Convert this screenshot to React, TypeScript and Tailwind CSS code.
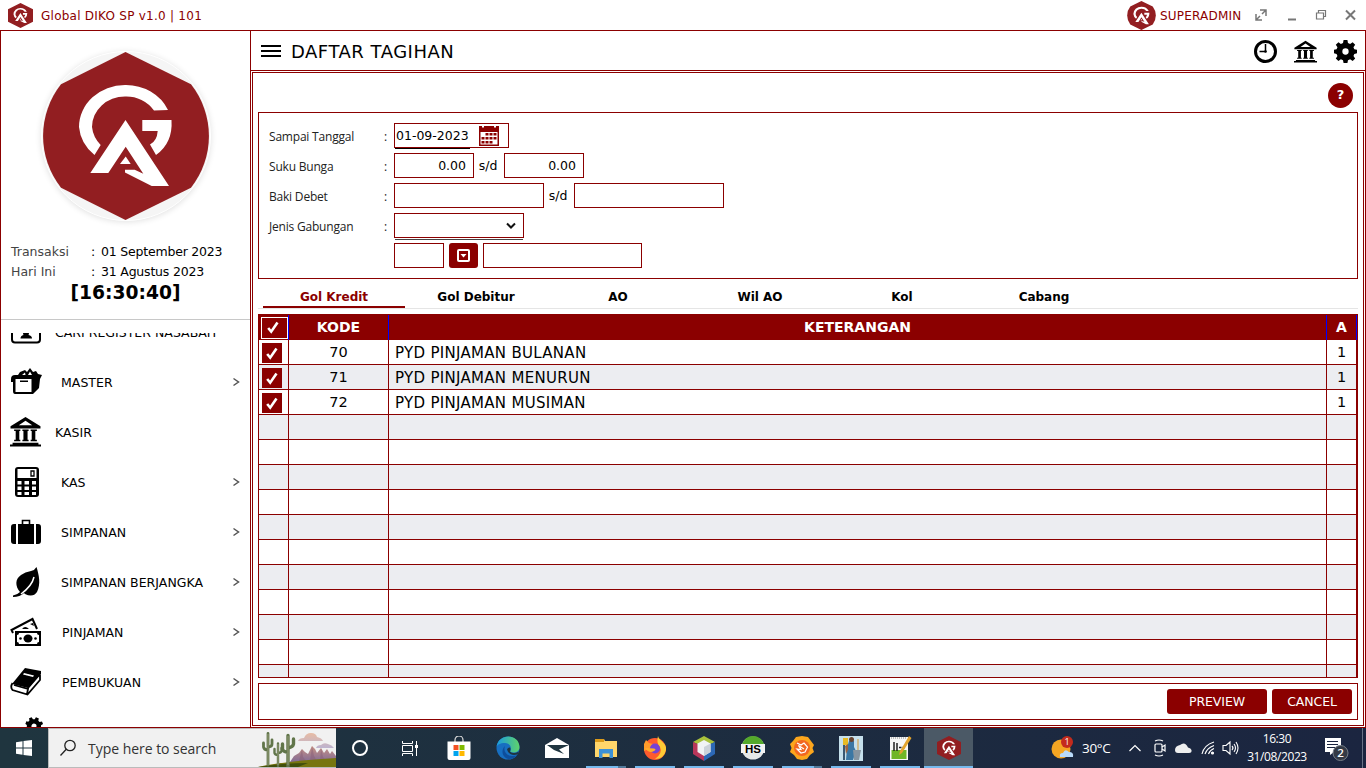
import React from "react";

const red = "#8b0000";

function Emblem({ size, round = false }: { size: number; round?: boolean }) {
  return (
    <svg width={size} height={size} viewBox="0 0 168 168" className="block shrink-0">
      {round ? (
        <path d="M83.500 0 149 32.300A83.500 83.500 0 0 1 149 135.700L83.500 168 19 135.700A83.500 83.500 0 0 1 19 32.300Z" fill="#921e21" />
      ) : (
        <path d="M84 0 168 42V126L84 168 0 126V42Z" fill="#921e21" />
      )}
      <path
        d="M52.500 103A46 42 0 0 1 37 75A46 42 0 0 1 83 33A46 42 0 0 1 126 58L112 58.500A33 31 0 0 0 83 44.500A33 30.500 0 0 0 50 75A33 31 0 0 0 58.700 93Z"
        fill="#fff"
      />
      <path d="M100.300 68H129.500Q131 91 114 103L108 92.500Q115 89 115.700 79H100.300Z" fill="#fff" />
      <path d="M83.500 68 127 134H109.700L83 120.500V117.700H92.700L101.300 121.700 83.700 94.700 66.300 121H48.300Z" fill="#fff" />
      <path d="M83.700 104.500 88.700 112H78Z" fill="#fff" />
    </svg>
  );
}

function Bank({ size }: { size: number }) {
  return (
    <svg width={size} height={size} viewBox="0 0 30 30" className="block shrink-0" fill="#000">
      <path fillRule="evenodd" d="M15 1 29.500 10V12H.5V10ZM15 4.500 8.500 9H21.500Z" />
      <path d="M4 13H10V14.500H9V23H10V24.500H4V23H5.500V14.500H4ZM12 13H18V14.500H17V23H18V24.500H12V23H13V14.500H12ZM20 13H26V14.500H24.500V23H26V24.500H20V23H21V14.500H20ZM2.500 26H27.500V27.500H30V29.500H0V27.500H2.500Z" />
    </svg>
  );
}

function Gear({ size }: { size: number }) {
  return (
    <svg width={size} height={size} viewBox="0 0 24 24" className="block shrink-0">
      <path
        fillRule="evenodd"
        d="M10 0h4l.6 3.200 2.200.9L19.500 2.300l2.600 2.600-1.800 2.600.9 2.200 2.800.5v3.700l-2.800.6-.9 2.200 1.800 2.600-2.600 2.600-2.700-1.700-2.200.9L14 24h-4l-.6-2.900-2.200-.9-2.600 1.700-2.700-2.600 1.700-2.600-.9-2.200L0 13.900v-3.700l2.700-.5.9-2.200-1.700-2.600 2.700-2.600 2.600 1.800 2.200-.9ZM12 8.700a3.300 3.300 0 1 0 0 6.600 3.300 3.300 0 0 0 0-6.600Z"
      />
    </svg>
  );
}

const icons: Record<string, React.ReactNode> = {
  card: (
    <>
      <path d="M2 0V23.500Q2 26.500 5 26.500H27Q30 26.500 30 23.500V0" fill="none" stroke="#000" strokeWidth="2" />
      <path d="M16 14C20 14 19 18 18.500 19Q22 19.500 22 22.500H10.500Q10.500 19.500 13.500 19C13 18 12 14 16 14Z" />
    </>
  ),
  master: (
    <>
      <path d="M1 13Q1 9 5 9H8L10 6 15 4 17 6 20 2 23 6 26 5 28 8 32 9 30 13 29 22 23 28H5Q3 28 3 25V16H1Z" />
      <path d="M12 9 15 6.500 15.500 9ZM18 9 20 5.500 22 9Z" fill="#fff" />
      <path d="M5.500 13H21.500V26H5.500Z" fill="#fff" />
      <path d="M10 14.500H18V16H10Z" />
    </>
  ),
  kas: (
    <>
      <rect x="5" y="1" width="24" height="30" rx="3" />
      <path d="M7.500 3H26.500V12H7.500ZM7.500 15H11.500V18.500H7.500ZM14.500 15H19V18.500H14.500ZM22 15H26V18.500H22ZM7.500 20.500H11.500V24H7.500ZM14.500 20.500H19V24H14.500ZM22 20.500H26V24H22ZM7.500 26H11.500V29H7.500ZM14.500 26H19V29H14.500ZM22 26H26V29H22Z" fill="#fff" />
      <path d="M21 5H24V10H21Z" fill="none" stroke="#000" strokeWidth="1.300" />
    </>
  ),
  simpanan: (
    <>
      <path d="M12.500 8V4.500H19.500V8" fill="none" stroke="#000" strokeWidth="1.600" />
      <path d="M8 8H24V28H8ZM6 8V28H4Q1 28 1 25V11Q1 8 4 8ZM26 8V28H28Q31 28 31 25V11Q31 8 28 8Z" />
    </>
  ),
  leaf: (
    <>
      <path d="M26.500 1C29 9 31 18 27 26Q23 32 15 28L14 27Q10 31 3 31V29.500Q7 29 10 26C5 20 5 13 11 9Q15 6 21 5Q25 4 26.500 1Z" />
      <path d="M24 11Q22 20 11 28" fill="none" stroke="#fff" strokeWidth="1.500" />
    </>
  ),
  money: (
    <>
      <path d="M3 17 1.500 14 22.500 3 27 13" fill="none" stroke="#000" strokeWidth="2" />
      <path d="M12 13Q15 9 19 13ZM20 8 23 7 24 10Z" />
      <path fillRule="evenodd" d="M5 15H31V30H5ZM9 17Q9 19 7 19V26Q9 26 9 28H27Q27 26 29 26V19Q27 19 27 17Z" />
      <ellipse cx="18" cy="22.500" rx="4.500" ry="4" />
      <circle cx="10.500" cy="22.500" r="1.300" />
      <circle cx="25.500" cy="22.500" r="1.300" />
    </>
  ),
  book: (
    <>
      <path d="M15 2 31 5V8L18 22 2 18Z" />
      <path d="M2.500 17Q0 21 2.500 24L17.500 28.500 30 14V9M18 22 30 8M4 19 18 23 17 28" fill="none" stroke="#000" strokeWidth="1.800" />
      <path d="M14 7 24 9.500 23 11 13 8.500Z" fill="#fff" />
    </>
  ),
};

function MenuRow({ icon, label, arrow, pad }: { icon: React.ReactNode; label: string; arrow?: boolean; pad: string }) {
  return (
    <div className="flex h-[50px] shrink-0 items-center pl-[9px] pr-[10px]">
      <svg width="32" height="32" viewBox="0 0 32 32" className="shrink-0">
        {icon}
      </svg>
      <span className={`${pad} flex-1 whitespace-nowrap pt-[2px] text-[12.500px] tracking-[0.02px] text-black`}>{label}</span>
      {arrow && (
        <svg width="8" height="10" viewBox="0 0 8 10">
          <path d="M1.500 1.500 6.500 5 1.500 8.500" fill="none" stroke="#555" strokeWidth="1.500" />
        </svg>
      )}
    </div>
  );
}

function Check() {
  return (
    <svg width="12" height="13" viewBox="0 0 12 13">
      <path d="M1.200 7 4.200 10.700 10.500 1.500" fill="none" stroke="#fff" strokeWidth="2.600" />
    </svg>
  );
}

function DateRow({ label, value }: { label: string; value: string }) {
  return (
    <div className="flex whitespace-nowrap">
      <span className="w-[80px] text-[#444]">{label}</span>
      <span className="w-[10px]">:</span>
      <span className="tracking-[-0.2px]">{value}</span>
    </div>
  );
}

function Sidebar() {
  return (
    <aside className="flex w-[251px] shrink-0 flex-col border-x border-[#8b0000]">
      <div className="flex h-[210px] shrink-0 justify-center pt-[20px]">
        <div className="flex h-[170px] w-[170px] items-center justify-center rounded-full border border-white bg-[#f5f5f5] shadow-[0_1px_6px_rgba(0,0,0,0.12)]">
          <Emblem size={168} round />
        </div>
      </div>
      <div className="h-[79px] shrink-0 border-b border-[#c8c8c8] pl-[10px] pt-px text-[12.500px] leading-[20px] text-black">
        <DateRow label="Transaksi" value="01 September 2023" />
        <DateRow label="Hari Ini" value="31 Agustus 2023" />
        <div className="pr-[10px] text-center text-[18.700px] font-bold leading-[22px]">[16:30:40]</div>
      </div>
      <nav className="mt-[13px] flex flex-1 flex-col overflow-hidden">
        <div className="-mt-[26px] flex flex-col">
          <MenuRow icon={icons.card} label="CARI REGISTER NASABAH" pad="pl-[13px]" />
          <MenuRow icon={icons.master} label="MASTER" arrow pad="pl-[19px]" />
          <MenuRow icon={<Bank size={31} />} label="KASIR" pad="pl-[13px]" />
          <MenuRow icon={icons.kas} label="KAS" arrow pad="pl-[19px]" />
          <MenuRow icon={icons.simpanan} label="SIMPANAN" arrow pad="pl-[19px]" />
          <MenuRow icon={icons.leaf} label="SIMPANAN BERJANGKA" arrow pad="pl-[19px]" />
          <MenuRow icon={icons.money} label="PINJAMAN" arrow pad="pl-[20px]" />
          <MenuRow icon={icons.book} label="PEMBUKUAN" arrow pad="pl-[20px]" />
          <div className="flex pl-[24px] pt-[10px]">
            <div className="rotate-[22.5deg]">
              <Gear size={18} />
            </div>
          </div>
        </div>
      </nav>
    </aside>
  );
}

function FormLabel({ children }: { children: string }) {
  return (
    <div className="flex w-[125px] shrink-0 pt-[3px] font-['Open_Sans',sans-serif] text-[12px] text-[#222]">
      <span className="w-[115px] whitespace-nowrap tracking-[-0.2px]">{children}</span>
      <span>:</span>
    </div>
  );
}

function Filters() {
  return (
    <div className="flex h-[167px] shrink-0 flex-col gap-[5px] border border-[#8b0000] pl-[10px] pt-[10px] text-[12.500px] text-black">
      <div className="flex h-[25px] items-center">
        <FormLabel>Sampai Tanggal</FormLabel>
        <div className="relative flex h-[25px] w-[115px] items-center border border-[#8b0000] pl-px">
          <span className="w-[83px] pt-px">01-09-2023</span>
          <svg width="20" height="20" viewBox="0 0 20 20">
            <path d="M0 0H3V1.500H5V0H15V1.500H17V0H20V20H0Z" fill={red} />
            <path d="M1.500 6H18.500V18.500H1.500Z" fill="#fff" />
            <path d="M6.500 7h3v2.500h-3zM10.500 7h3v2.500h-3zM14.500 7h3v2.500h-3zM2.500 11h3v2.500h-3zM6.500 11h3v2.500h-3zM10.500 11h3v2.500h-3zM14.500 11h3v2.500h-3zM2.500 15h3v2.500h-3zM6.500 15h3v2.500h-3zM10.500 15h3v2.500h-3z" fill={red} />
          </svg>
          <div className="absolute left-0 top-[24px] h-px w-[75px] bg-black" />
        </div>
      </div>
      <div className="flex h-[25px] items-center">
        <FormLabel>Suku Bunga</FormLabel>
        <div className="flex h-[25px] w-[80px] items-center justify-end border border-[#8b0000] pr-[7px] pt-[2px]">0.00</div>
        <span className="w-[30px] pr-[2px] pt-[2px] text-center">s/d</span>
        <div className="flex h-[25px] w-[80px] items-center justify-end border border-[#8b0000] pr-[7px] pt-[2px]">0.00</div>
      </div>
      <div className="flex h-[25px] items-center">
        <FormLabel>Baki Debet</FormLabel>
        <div className="h-[25px] w-[150px] border border-[#8b0000]" />
        <span className="w-[30px] pr-[2px] pt-[2px] text-center">s/d</span>
        <div className="h-[25px] w-[150px] border border-[#8b0000]" />
      </div>
      <div className="flex h-[25px] items-center">
        <FormLabel>Jenis Gabungan</FormLabel>
        <div className="relative flex h-[25px] w-[130px] items-center justify-end border border-[#8b0000] pr-[7px]">
          <svg width="10" height="8" viewBox="0 0 10 8">
            <path d="M1 1.500 5 5.500 9 1.500" fill="none" stroke="#111" strokeWidth="2" />
          </svg>
          <div className="absolute left-0 top-[25px] h-px w-[128px] bg-[#444]" />
        </div>
      </div>
      <div className="flex h-[25px] items-center pl-[125px]">
        <div className="h-[25px] w-[50px] border border-[#8b0000]" />
        <div className="ml-[5px] flex h-[25px] w-[29px] items-center justify-center rounded-[3px] bg-[#8b0000]">
          <svg width="13" height="13" viewBox="0 0 13 13">
            <rect x="1" y="1" width="11" height="11" rx="1" fill="none" stroke="#fff" strokeWidth="2" />
            <path d="M3.500 5H9.500L6.500 8.500Z" fill="#fff" />
          </svg>
        </div>
        <div className="ml-[5px] h-[25px] w-[159px] border border-[#8b0000]" />
      </div>
    </div>
  );
}

const rows = [
  ["70", "PYD PINJAMAN BULANAN"],
  ["71", "PYD PINJAMAN MENURUN"],
  ["72", "PYD PINJAMAN MUSIMAN"],
  ...Array.from({ length: 11 }, () => ["", ""]),
];

function Table() {
  return (
    <div className="mt-[5px] flex h-[364px] shrink-0 flex-col overflow-hidden border border-[#8b0000] text-[14.500px] text-black">
      <div className="flex h-[25px] shrink-0 bg-[#8b0000] text-[14px] font-bold text-white">
        <div className="flex w-[30px] items-center border-r border-[#0000ff] pl-[2px]">
          <div className="flex h-[22px] w-[27px] items-center border border-white pl-[5px]">
            <Check />
          </div>
        </div>
        <div className="flex w-[100px] items-center justify-center border-r border-[#0000ff]">KODE</div>
        <div className="flex flex-1 items-center justify-center border-r border-[#0000ff]">KETERANGAN</div>
        <div className="flex w-[30px] items-center justify-center border-r border-[#0000ff]">A</div>
      </div>
      {rows.map(([code, name], i) => (
        <div key={i} className={`flex h-[25px] shrink-0 border-b border-[#8b0000] ${i % 2 ? "bg-[#ecedf1]" : "bg-white"}`}>
          <div className="flex w-[30px] items-center border-r border-[#8b0000] pl-[3px] pt-[2px]">
            {code && (
              <div className="flex h-[20px] w-[20px] items-center justify-center bg-[#8b0000]">
                <Check />
              </div>
            )}
          </div>
          <div className="flex w-[100px] items-center justify-center border-r border-[#8b0000] pt-[2px]">{code}</div>
          <div className="flex flex-1 items-center border-r border-[#8b0000] pl-[6px] pt-[2px] text-[15px] tracking-[0.3px]">{name}</div>
          <div className="flex w-[30px] items-center justify-center border-r border-[#8b0000] pt-[2px]">{code && "1"}</div>
        </div>
      ))}
    </div>
  );
}

function Content() {
  return (
    <main className="flex flex-1 flex-col border-r border-[#8b0000]">
      <header className="flex h-[40px] shrink-0 items-center border-b border-[#8b0000] pl-[10px] pr-[8px]">
        <div className="flex w-[20px] flex-col gap-[3px]">
          <div className="h-[2px] bg-black" />
          <div className="h-[2px] bg-black" />
          <div className="h-[2px] bg-black" />
        </div>
        <h1 className="flex-1 pl-[10px] pt-px text-[18px] tracking-[0.5px] text-black">DAFTAR TAGIHAN</h1>
        <div className="flex items-center gap-[17px] pt-[2px]">
          <svg width="23" height="23" viewBox="0 0 23 23">
            <circle cx="11.500" cy="11.500" r="10" fill="none" stroke="#000" strokeWidth="3" />
            <path d="M11.500 4V11.500H5.500" fill="none" stroke="#000" strokeWidth="1.500" />
            <circle cx="11.500" cy="11.500" r="1.300" />
          </svg>
          <Bank size={23} />
          <Gear size={23} />
        </div>
      </header>
      <div className="mb-px ml-px mr-px mt-px flex flex-1 flex-col border border-[#8b0000] px-[5px]">
        <div className="flex h-[39px] shrink-0 items-center justify-end pr-[5px] pt-[5px]">
          <div className="flex h-[25px] w-[25px] items-center justify-center rounded-full bg-[#8b0000] text-[13px] font-bold text-white">?</div>
        </div>
        <Filters />
        <div className="flex h-[30px] shrink-0 border-b border-[#e5e5e5] pl-[5px] text-[12px] font-bold text-black">
          {["Gol Kredit", "Gol Debitur", "AO", "Wil AO", "Kol", "Cabang"].map((t, i) => (
            <div
              key={t}
              className={`flex w-[142px] items-center justify-center whitespace-nowrap ${i === 0 ? "border-b-2 border-[#8b0000] pt-[9px] text-[#8b0000]" : "pt-[7px]"}`}
            >
              {t}
            </div>
          ))}
        </div>
        <Table />
        <div className="mt-[5px] flex h-[37px] shrink-0 items-center justify-end gap-[5px] border border-[#8b0000] pr-[5px] text-[12.500px] tracking-[-0.1px] text-white">
          <button className="h-[25px] w-[100px] rounded-[3px] bg-[#8b0000] pt-[2px]">PREVIEW</button>
          <button className="h-[25px] w-[80px] rounded-[3px] bg-[#8b0000] pt-[2px]">CANCEL</button>
        </div>
      </div>
    </main>
  );
}

const apps: { art: React.ReactNode; state: "off" | "on" | "multi" | "active" }[] = [
  {
    state: "off",
    art: (
      <>
        <path d="M8 6V4a4 4 0 0 1 8 0V6" fill="none" stroke="#ddd" strokeWidth="1.200" />
        <path d="M.5 5.500H23.500V22Q23.500 24 21.500 24H2.500Q.5 24 .5 22Z" fill="#fff" />
        <path d="M6.500 9h5v5h-5z" fill="#f25022" />
        <path d="M12.500 9h5v5h-5z" fill="#7fba00" />
        <path d="M6.500 15h5v5h-5z" fill="#00a4ef" />
        <path d="M12.500 15h5v5h-5z" fill="#ffb900" />
      </>
    ),
  },
  {
    state: "off",
    art: (
      <>
        <defs>
          <linearGradient id="edgeTop">
            <stop stopColor="#1a9be0" />
            <stop offset="1" stopColor="#5fd36a" />
          </linearGradient>
        </defs>
        <circle cx="12" cy="12" r="11.500" fill="#176fc1" />
        <path d="M.6 11C2-3 23-3 23.500 11 23.500 17 17 17.500 14 15.500 16 13 15 7 9 7 4 7 1 9 .6 11Z" fill="url(#edgeTop)" />
        <path d="M9 10C7 15 10 20 17 20Q20 20 21.500 18.500 18 23 13 23C7 22 4 15 9 10Z" fill="#0e4e9b" />
        <path d="M14 15.500Q17 18.500 23 15.500L21.500 18.500Q13 20.500 11 13.500 12 11 14 11.500 15 13 14 15.500Z" fill="#203540" />
      </>
    ),
  },
  {
    state: "off",
    art: (
      <>
        <path d="M0 9 12 2 24 9V22H0Z" fill="#fff" />
        <path d="M2 9H24L14 13.500 19 18 9 14Z" fill="#203540" />
      </>
    ),
  },
  {
    state: "multi",
    art: (
      <>
        <path d="M1 3H10L11 5H23V21H1Z" fill="#ffd66b" />
        <path d="M1 3H10V6H1Z" fill="#dc9b1a" />
        <path d="M5 13H19V22H15.500V17.500H8.500V22H5Z" fill="#3d91d6" />
      </>
    ),
  },
  {
    state: "on",
    art: (
      <>
        <circle cx="12" cy="13" r="11" fill="#ff5b2d" />
        <path d="M15 0C16 5 24 7 23 14Q21 23 12 23 20 17 17 11 13 7 15 0Z" fill="#ffcb35" />
        <path d="M1 8 3 4 6 7 10 8 8 12 1 15Z" fill="#ff9c2a" />
        <circle cx="12" cy="12.500" r="5" fill="#7542d5" />
        <path d="M2 12 11 12.500Q14 13.500 11 15 6 18 2 12Z" fill="#ffae2b" />
      </>
    ),
  },
  {
    state: "on",
    art: (
      <>
        <path d="M12 0 23 6 12 11 1 6Z" fill="#a9c23c" />
        <path d="M1 6 12 11V25L1 18Z" fill="#b9365a" />
        <path d="M23 6 12 11V25L23 18Z" fill="#2c68b5" />
        <path d="M12 4 18.500 7.500V16L12 20 5.500 16V7.500Z" fill="#f1f3f4" />
        <path d="M12 11 18.500 7.500V16L12 20Z" fill="#ccd2d9" />
      </>
    ),
  },
  {
    state: "on",
    art: (
      <>
        <circle cx="12" cy="12" r="11.500" fill="#e6e8e8" />
        <path d="M.8 9A11.500 11.500 0 0 1 23.200 9Z" fill="#54a92b" />
        <path d="M0 8H24V17H0Z" fill="#f3f3f3" />
        <text x="12" y="16.500" textAnchor="middle" fontSize="11.500" fontWeight="bold" fontFamily="Liberation Sans">HS</text>
      </>
    ),
  },
  {
    state: "multi",
    art: (
      <>
        <path d="M6 1 12 0 18 1 21 5 24 9 22.500 12 24 16 20 19 17 23 12 24 7 23 4 19 0 16 1.500 12 0 8 3 5Z" fill="#fca61d" />
        <circle cx="12" cy="12" r="8" fill="#f26722" />
        <path d="M7 7 11 9 14 7 17.500 11 15 16 11 17 7 13 11 13.500 8.500 9.500 14 13" fill="none" stroke="#fff" strokeWidth="1.200" />
      </>
    ),
  },
  {
    state: "on",
    art: (
      <>
        <path d="M0 0H24V25H0Z" fill="#c6e0ec" />
        <path d="M4 2H9V9H4Z" fill="#e7ba23" />
        <path d="M10 5H15V11L17 15 14 24H7L8 12Z" fill="#3b77a4" />
        <path d="M9 8 6 10 7 18 9 14Z" fill="#9b6341" />
        <circle cx="12.500" cy="3.500" r="2.500" fill="#68432f" />
        <path d="M14 14H22L20 24H15Z" fill="#8795a1" />
        <path d="M19 3V14" stroke="#d69b37" />
        <path d="M5 9V24" stroke="#385772" strokeWidth="2" />
      </>
    ),
  },
  {
    state: "on",
    art: (
      <>
        <path d="M2 1H20V24H2Z" fill="#f7f7f7" />
        <path d="M3.500 14H18.500V23H3.500Z" fill="#70b626" />
        <path d="M3 2H19" stroke="#888" strokeDasharray="1 1" />
        <path d="M6 6V15M9 7V15M11 11.500H13.500M14.500 11.500H17" stroke="#222" strokeWidth="1.500" />
        <path d="M23.500 2 14 17 11 19 12 15 21 0Z" fill="#e3a42e" />
      </>
    ),
  },
  { state: "active", art: <Emblem size={24} /> },
];

function Taskbar() {
  return (
    <footer className="flex h-[40px] shrink-0 items-stretch bg-linear-to-r from-[#1f353f] to-[#1b2540] font-['Open_Sans',sans-serif] text-white">
      <div className="flex w-[48px] items-center justify-center">
        <svg width="16" height="16" viewBox="0 0 16 16" fill="#fff">
          <path d="M0 2.200 6.500 1.300V7.500H0ZM7.500 1.100 16 0V7.500H7.500ZM0 8.500H6.500V14.700L0 13.800ZM7.500 8.500H16V16L7.500 14.900Z" />
        </svg>
      </div>
      <div className="flex w-[288px] items-center border border-r-0 border-[#bbb] bg-[#f1f1f1] pl-[10px]">
        <svg width="18" height="18" viewBox="0 0 18 18" fill="none" stroke="#222" strokeWidth="1.300">
          <circle cx="11" cy="6.500" r="5.200" />
          <path d="M7.500 10 1.500 16.500" />
        </svg>
        <span className="flex-1 whitespace-nowrap pl-[11px] text-[14px] tracking-[-0.030px] text-[#333]">Type here to search</span>
        <svg width="78" height="38" viewBox="0 0 78 38">
          <defs>
            <linearGradient id="rock" x1="0" y1="0" x2="0" y2="1">
              <stop stopColor="#c99383" />
              <stop offset="1" stopColor="#75649a" />
            </linearGradient>
            <linearGradient id="cloud" x1="0" y1="0" x2="0" y2="1">
              <stop stopColor="#e8bca4" />
              <stop offset="1" stopColor="#bdb3cf" />
            </linearGradient>
          </defs>
          <path d="M30 36 36 27 41 24 44 20 47 23 50 25 54 17 57 20 59 24 63 19 66 24 69 20 72 25 74 22 78 27V36Z" fill="url(#rock)" />
          <path d="M54 17 56 27 59 32H52ZM63 19 65 28 68 32H62ZM44 20 45 28 48 32H41Z" fill="#8a6178" opacity=".55" />
          <path d="M40 12Q41 9 46 9 48 4 53 4 58 4 59 8 64 9 65 12ZM58 19Q59 16 63 16 66 13 70 15 74 16 76 19Z" fill="url(#cloud)" />
          <path d="M0 38Q28 32 78 29V38Z" fill="#77750f" />
          <path d="M0 38Q24 34 50 34L40 38Z" fill="#414f0c" />
          <g fill="none" stroke="#61754a" strokeLinecap="round">
            <path d="M10 36V4.500M5.500 14V18Q6 21 10 21M14 11V15Q14 18 10 18" strokeWidth="2.800" />
            <path d="M20 37V14.500M16.500 20V24Q17 26 20 26M23.500 19V22Q23 24 20 24" strokeWidth="2.400" />
            <path d="M30 37V6.500M24.500 15V20Q25 23 30 23M35.500 10V15Q35 18 30 19" strokeWidth="3.400" />
          </g>
          <path d="M10 5V36M20 15V36M30 7V36" stroke="#a3a785" strokeWidth=".8" />
        </svg>
      </div>
      <div className="flex w-[48px] items-center justify-center">
        <div className="h-[16px] w-[16px] rounded-full border-[2.500px] border-white" />
      </div>
      <div className="flex w-[50px] items-center justify-center">
        <svg width="17" height="15" viewBox="0 0 17 15" fill="none" stroke="#fff">
          <path d="M1.500 0V2.500H11.500V0M1.500 15V12.500H11.500V15M1.500 4.500H11.500V10.500H1.500ZM15.500 0V15" />
          <path d="M14 4H17V7H14Z" fill="#fff" stroke="none" />
        </svg>
      </div>
      <div className="flex">
        {apps.map(({ art, state }, i) => (
          <div key={i} className={`relative flex w-[49px] items-center justify-center ${state === "active" ? "bg-[#4b5966]" : ""}`}>
            <svg width="24" height="25" viewBox="0 0 24 25">
              {art}
            </svg>
            {state !== "off" && (
              <div
                className={`absolute bottom-0 h-[2px] bg-[#76b9ed] ${state === "active" ? "w-[49px]" : state === "multi" ? "w-[40px] border-r-[8px] border-[#527a9b]" : "w-[40px]"}`}
              />
            )}
          </div>
        ))}
      </div>
      <div className="flex flex-1 items-center justify-end">
        <svg width="25" height="24" viewBox="0 0 25 24">
          <circle cx="10" cy="13" r="9.500" fill="#f5a623" />
          <path d="M9 21Q8 17 12 17 14 12 18 16 23 16 22 21Z" fill="#b9dbfa" />
          <circle cx="16" cy="6" r="6" fill="#c42b1c" />
          <text x="16" y="9" textAnchor="middle" fontSize="9" fill="#fff">1</text>
        </svg>
        <span className="ml-[6px] w-[46px] text-[13.500px] tracking-[-0.3px]">30°C</span>
        <svg width="113" height="20" viewBox="0 0 113 20" fill="none" stroke="#fff" strokeWidth="1.200">
          <path d="M1.500 13 7 7.500 12.500 13" />
          <rect x="27" y="6" width="7" height="8" rx="1" />
          <path d="M34 9 37 7V13L34 11M27 3Q31 1 35 3M27 17Q31 19 35 17" />
          <path d="M50 15H61Q64 15 63.500 12 63 10 60 9.500 57 3 52 7 47 8 47 12 47 15 50 15Z" fill="#eee" stroke="none" />
          <g strokeWidth="1.100">
            <path d="M74 16Q76 7 86 4M77 16Q79 10 86 7.500M80.500 16Q82 12 86 10.500" />
            <circle cx="84.500" cy="15" r="1" fill="#fff" />
            <path d="M95 7.500H98L102 4V16L98 12.500H95ZM104 8Q106 10 104 12M106 6Q109 10 106 14M108 4Q112 10 108 16" />
          </g>
        </svg>
      </div>
      <div className="flex w-[73px] flex-col items-center justify-center pr-px text-[12px] leading-[18px] tracking-[-0.4px]">
        <span>16:30</span>
        <span>31/08/2023</span>
      </div>
      <div className="flex w-[52px] items-center pl-[10px]">
        <svg width="26" height="26" viewBox="0 0 26 26">
          <path d="M1 3H17V17H10L6 20V17H1Z" fill="#fff" />
          <path d="M3 6.500H14M3 9.500H14M3 12.500H11" stroke="#1b2540" />
          <circle cx="16.500" cy="18" r="7.500" fill="#343a45" stroke="#777f89" />
          <text x="16.500" y="22" textAnchor="middle" fontSize="11.500" fontWeight="600" fill="#fff">2</text>
        </svg>
        <div className="ml-auto mr-[3px] h-full w-px bg-[#687286]" />
      </div>
    </footer>
  );
}

export default function App() {
  return (
    <div className="flex h-[768px] w-[1366px] flex-col overflow-hidden bg-white font-['DejaVu_Sans',sans-serif]">
      <div className="flex h-[31px] shrink-0 items-center border-b border-[#8b0000] pl-[8px] pr-[9px] text-[12px] text-[#8b0000]">
        <Emblem size={25} />
        <span className="flex-1 pl-[8px] pt-[2px] tracking-[0.250px]">Global DIKO SP v1.0 | 101</span>
        <Emblem size={29} round />
        <span className="w-[99px] whitespace-nowrap pl-[4px] pt-[2px] tracking-[0.2px]">SUPERADMIN</span>
        <svg width="102" height="14" viewBox="0 0 102 14" fill="none" stroke="#777" strokeWidth="1.500">
          <path d="M5 2H11V8M11 2 7 6M1 6V12H7M1 12 5 8" />
          <path d="M33 11.500H41" strokeWidth="2" />
          <path d="M61.500 5H68.500V11H61.500ZM63.500 5V2.500H70.500V8.500H68.500" strokeWidth="1.200" />
          <path d="M91 2.500 100 11.500M100 2.500 91 11.500" strokeWidth="2" />
        </svg>
      </div>
      <div className="flex min-h-0 flex-1 border-b border-[#8b0000]">
        <Sidebar />
        <Content />
      </div>
      <Taskbar />
    </div>
  );
}
